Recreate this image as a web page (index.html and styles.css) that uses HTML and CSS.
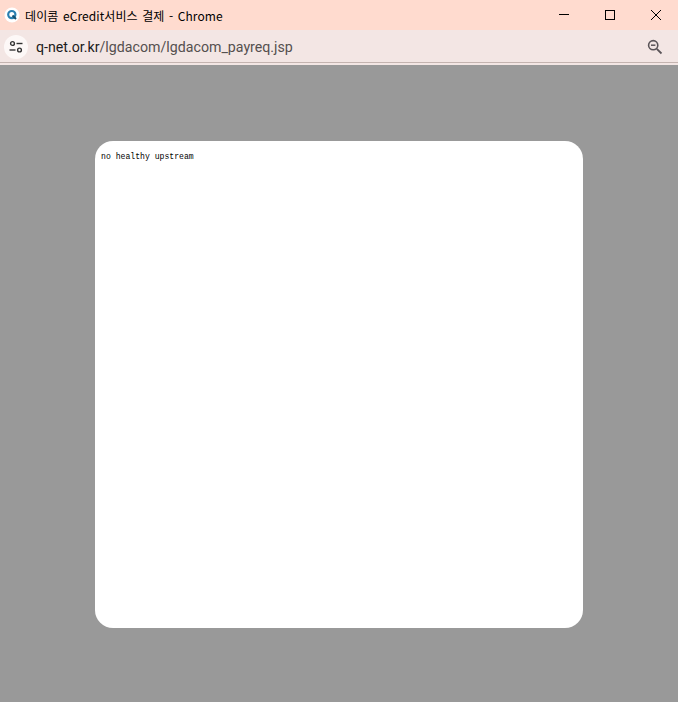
FILE: index.html
```html
<!DOCTYPE html>
<html lang="ko">
<head>
<meta charset="utf-8">
<title>데이콤 eCredit서비스 결제 - Chrome</title>
<link rel="stylesheet" href="styles.css">
</head>
<body>
<div class="window">
  <header class="titlebar">
    <svg class="favicon" width="16" height="16" viewBox="0 0 16 16">
      <circle cx="8" cy="8" r="7.5" fill="#fff"/>
      <circle cx="7.8" cy="7.6" r="3.6" fill="none" stroke="#2a7fb0" stroke-width="2.2"/>
      <path d="M8.5 8.5 L12 12" stroke="#14506f" stroke-width="2"/>
    </svg>
    <span class="title">데이콤 eCredit서비스 결제 - Chrome</span>
    <div class="controls">
      <svg class="ctl" width="46" height="30" viewBox="0 0 46 30"><path d="M18 14.5 H28" stroke="#000" fill="none"/></svg>
      <svg class="ctl" width="46" height="30" viewBox="0 0 46 30"><rect x="18.5" y="10.5" width="9" height="9" stroke="#000" fill="none"/></svg>
      <svg class="ctl" width="46" height="30" viewBox="0 0 46 30"><path d="M18 10 L28 20 M28 10 L18 20" stroke="#000" fill="none"/></svg>
    </div>
  </header>
  <div class="addressbar">
    <div class="siteinfo">
      <svg width="16" height="16" viewBox="0 0 16 16" fill="none" stroke="#333" stroke-width="1.4">
        <circle cx="4.5" cy="4.5" r="1.9"/>
        <path d="M8.5 4.5 H14.5"/>
        <circle cx="11.5" cy="11" r="1.9"/>
        <path d="M1.5 11 H7.5"/>
      </svg>
    </div>
    <div class="url"><span class="host">q-net.or.kr</span>/lgdacom/lgdacom_payreq.jsp</div>
    <svg class="zoom" width="18" height="18" viewBox="0 0 18 18" fill="none" stroke="#5a5458">
      <circle cx="7.2" cy="7.2" r="4.6" stroke-width="1.6"/>
      <path d="M5 7.2 H9.4" stroke-width="1.5"/>
      <path d="M10.8 10.8 L15.5 15.5" stroke-width="1.8"/>
    </svg>
  </div>
  <main class="overlay">
    <div class="modal">
      <pre class="message">no healthy upstream</pre>
    </div>
  </main>
</div>
</body>
</html>
```
FILE: styles.css
```css
html, body {
  margin: 0;
  padding: 0;
  height: 100%;
}
.window {
  width: 678px;
  height: 702px;
  display: flex;
  flex-direction: column;
  overflow: hidden;
  font-family: "Noto Sans CJK KR", "Noto Sans", sans-serif;
}
.titlebar {
  height: 30px;
  flex: none;
  display: flex;
  align-items: center;
  background: #ffdbcf;
  padding-left: 4px;
}
.favicon {
  flex: none;
}
.title {
  margin-left: 5px;
  font-size: 12px;
  letter-spacing: 0.1px;
  word-spacing: 1px;
  color: #000;
  white-space: nowrap;
}
.controls {
  margin-left: auto;
  display: flex;
  margin-right: -1px;
}
.ctl {
  display: block;
}
.addressbar {
  height: 31px;
  flex: none;
  display: flex;
  align-items: center;
  background: #f3e6e4;
  border-bottom: 1px solid #c4b4b0;
  padding: 1px 14px 0 4px;
}
.siteinfo {
  width: 24px;
  height: 24px;
  border-radius: 50%;
  background: #fdf8f7;
  display: flex;
  align-items: center;
  justify-content: center;
  flex: none;
}
.url {
  margin-left: 8px;
  font-family: "Roboto", sans-serif;
  font-size: 14.2px;
  color: #55504f;
  white-space: nowrap;
}
.host {
  color: #1c1b1b;
}
.zoom {
  margin-left: auto;
}
.overlay {
  flex: 1;
  background: #999999;
  border-top: 2px solid #f3e6e4;
  padding-top: 2px;
  display: flex;
  align-items: center;
  justify-content: center;
}
.modal {
  width: 488px;
  height: 487px;
  background: #fff;
  border-radius: 18px;
  padding: 10px 6px;
  box-sizing: border-box;
}
.message {
  margin: 0;
  font-family: "Liberation Mono", monospace;
  font-size: 8.15px;
  line-height: 11px;
  color: #000;
}
```
